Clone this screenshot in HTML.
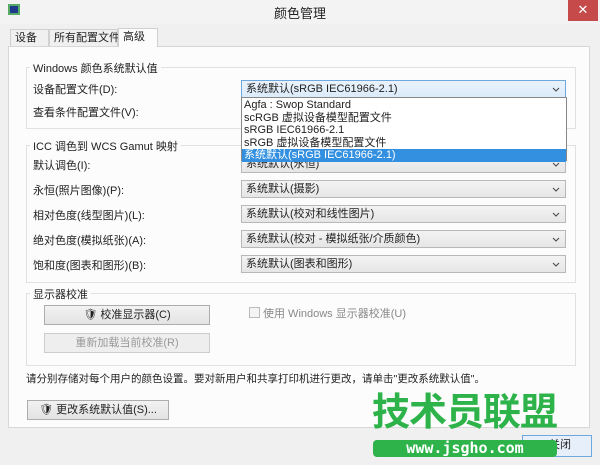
<!DOCTYPE html>
<html><head><meta charset="utf-8"><style>
*{box-sizing:border-box;margin:0;padding:0}
body{width:600px;height:465px;background:#f0f0f0;font-family:"Liberation Sans","Noto Sans CJK SC",sans-serif;font-size:11px;color:#222;position:relative;overflow:hidden}
.a{position:absolute;white-space:nowrap}
.title{left:0;top:0;width:600px;height:24px;background:#f3f3f3}
.close{left:568px;top:0;width:30px;height:21px;background:#c74a4a;color:#fff;text-align:center;font-size:13px;line-height:20px}
.tab{border:1px solid #d0d0d0;border-bottom:none;background:#f0f0f0;height:17px;top:29px;padding:1px 4px;line-height:14px}
.panel{left:8px;top:46px;width:582px;height:382px;background:#fcfcfc;border:1px solid #d7d7d7}
.grp{border:1px solid #e1e1e1;}
.gt{background:#fcfcfc;padding:0 3px}
.dd{left:241px;width:325px;height:18px;border:1px solid #b8b8b8;background:linear-gradient(#f3f3f3,#e6e6e6);padding:0 4px;line-height:16px;font-size:11px}
.dd svg{position:absolute;right:5px;top:6px}
.btn{border:1px solid #adadad;background:linear-gradient(#f2f2f2,#e3e3e3);text-align:center;height:20px;line-height:18px}
</style></head><body>
<div class="a title"></div>
<div class="a" style="left:8px;top:4px;width:12px;height:11px;background:#1e3a8a;border:2px solid #5a6"></div>
<div class="a" style="left:0;top:3px;width:600px;text-align:center;font-size:13px">颜色管理</div>
<div class="a close">✕</div>
<div class="a panel"></div>
<div class="a tab" style="left:10px;width:39px">设备</div>
<div class="a tab" style="left:49px;width:69px">所有配置文件</div>
<div class="a tab" style="left:118px;top:28px;width:40px;height:19px;background:#fcfcfc">高级</div>

<div class="a grp" style="left:26px;top:67px;width:550px;height:62px"></div>
<div class="a gt" style="left:30px;top:60px">Windows 颜色系统默认值</div>
<div class="a" style="left:33px;top:81px">设备配置文件(D):</div>
<div class="a dd" style="top:80px;border-color:#6fa8dc;background:linear-gradient(#eaf3fc,#dcebfa)">系统默认(sRGB IEC61966-2.1)<svg width="8" height="5"><path d="M1 1L4 4L7 1" stroke="#444" fill="none"/></svg></div>
<div class="a" style="left:33px;top:104px">查看条件配置文件(V):</div>

<div class="a grp" style="left:26px;top:145px;width:550px;height:138px"></div>
<div class="a gt" style="left:30px;top:138px">ICC 调色到 WCS Gamut 映射</div>
<div class="a" style="left:33px;top:157px">默认调色(I):</div>
<div class="a dd" style="top:155px">系统默认(永恒)<svg width="8" height="5"><path d="M1 1L4 4L7 1" stroke="#444" fill="none"/></svg></div>
<div class="a" style="left:33px;top:182px">永恒(照片图像)(P):</div>
<div class="a dd" style="top:180px">系统默认(摄影)<svg width="8" height="5"><path d="M1 1L4 4L7 1" stroke="#444" fill="none"/></svg></div>
<div class="a" style="left:33px;top:207px">相对色度(线型图片)(L):</div>
<div class="a dd" style="top:205px">系统默认(校对和线性图片)<svg width="8" height="5"><path d="M1 1L4 4L7 1" stroke="#444" fill="none"/></svg></div>
<div class="a" style="left:33px;top:232px">绝对色度(模拟纸张)(A):</div>
<div class="a dd" style="top:230px">系统默认(校对 - 模拟纸张/介质颜色)<svg width="8" height="5"><path d="M1 1L4 4L7 1" stroke="#444" fill="none"/></svg></div>
<div class="a" style="left:33px;top:257px">饱和度(图表和图形)(B):</div>
<div class="a dd" style="top:255px">系统默认(图表和图形)<svg width="8" height="5"><path d="M1 1L4 4L7 1" stroke="#444" fill="none"/></svg></div>

<div class="a" style="left:241px;top:97px;width:326px;height:64px;background:#fff;border:1px solid #888;line-height:12.6px;padding-top:1px">
<div style="padding-left:2px">Agfa : Swop Standard</div>
<div style="padding-left:2px">scRGB 虚拟设备模型配置文件</div>
<div style="padding-left:2px">sRGB IEC61966-2.1</div>
<div style="padding-left:2px">sRGB 虚拟设备模型配置文件</div>
<div style="padding-left:2px;background:#3390e0;color:#fff">系统默认(sRGB IEC61966-2.1)</div>
</div>

<div class="a grp" style="left:26px;top:293px;width:550px;height:73px"></div>
<div class="a gt" style="left:30px;top:286px">显示器校准</div>
<div class="a btn" style="left:44px;top:305px;width:166px">🛡 校准显示器(C)</div>
<div class="a btn" style="left:44px;top:333px;width:166px;color:#999;border-color:#ccc;background:#eee">重新加载当前校准(R)</div>
<div class="a" style="left:249px;top:307px;width:11px;height:11px;border:1px solid #bbb;background:#f4f4f4"></div>
<div class="a" style="left:263px;top:305px;color:#888">使用 Windows 显示器校准(U)</div>

<div class="a" style="left:26px;top:371px;font-size:10.5px">请分别存储对每个用户的颜色设置。要对新用户和共享打印机进行更改，请单击"更改系统默认值"。</div>
<div class="a btn" style="left:27px;top:400px;width:142px;height:20px">🛡 更改系统默认值(S)...</div>

<div class="a btn" style="left:522px;top:435px;width:70px;height:22px;border-color:#6fa8dc;background:#e6effa;text-align:right;padding-right:20px">关闭</div>
<div class="a" style="left:372px;top:391px;font-size:38px;font-weight:bold;color:#2db34a;letter-spacing:-1px;line-height:44px">技术员联盟</div>
<div class="a" style="left:373px;top:440px;width:184px;height:17px;background:#2db34a;border-radius:4px;color:#fff;font-family:'DejaVu Sans Mono',monospace;font-weight:bold;font-size:15px;text-align:center;line-height:17px">www.jsgho.com</div>
</body></html>
